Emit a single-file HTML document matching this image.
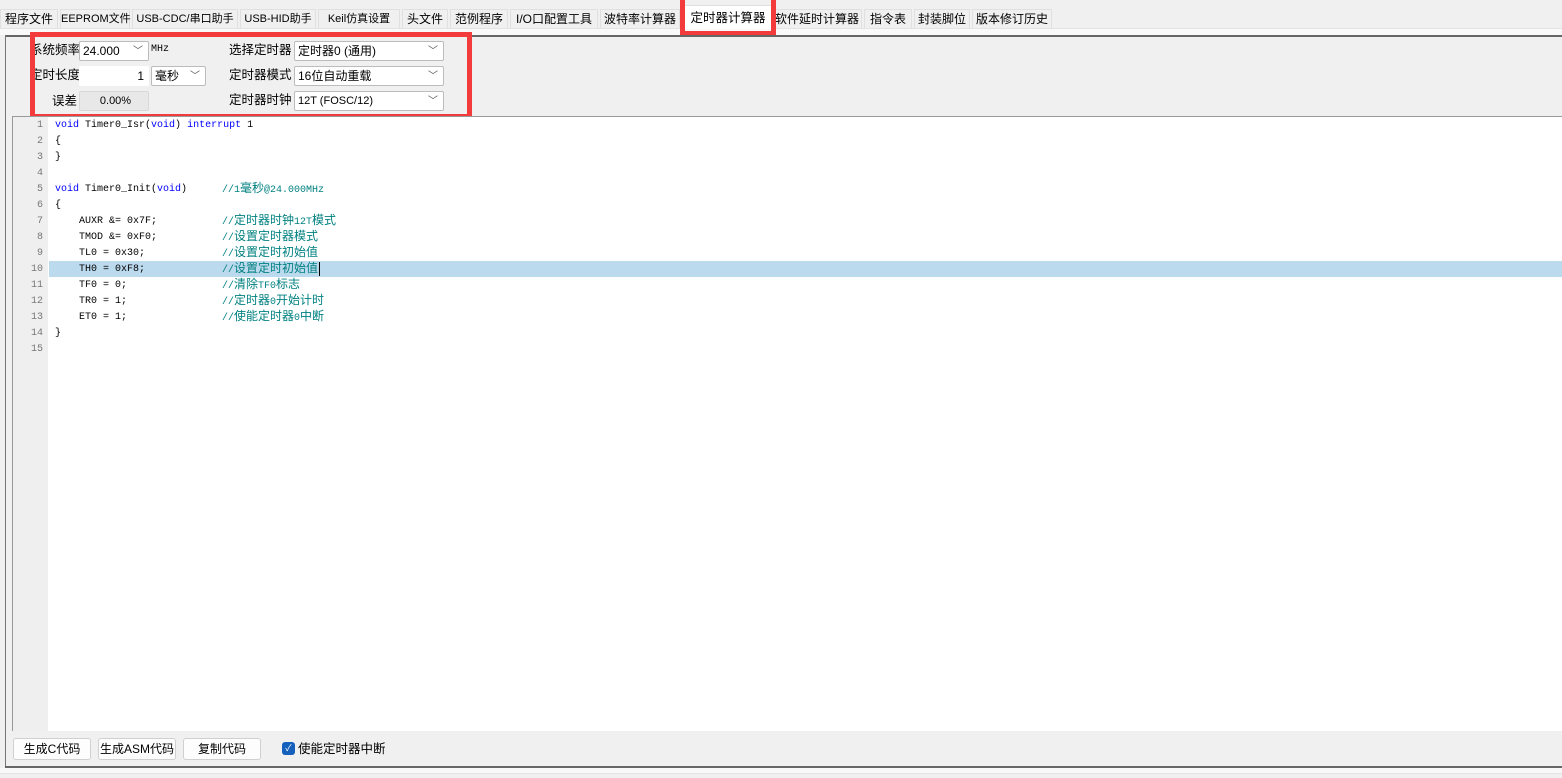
<!DOCTYPE html>
<html><head><meta charset="utf-8"><style>
*{margin:0;padding:0;box-sizing:border-box}
body{width:1562px;height:778px;background:#f0f0f0;position:relative;overflow:hidden;font-family:"Liberation Sans","Noto Sans CJK SC",sans-serif;font-size:12px;color:#000}
.a{position:absolute}
.tab{position:absolute;top:9px;height:19px;background:#f0f0f0;border:1px solid #e0e0e0;border-bottom:none;font-size:12px;line-height:18px;text-align:center;white-space:nowrap}
.sel{top:5px;height:24px;background:#fff;font-size:12.5px;line-height:24px}
.inp{position:absolute;height:20px;background:#fff;border:1px solid #bcbcbc;border-radius:2px;font-size:12px;line-height:18px;padding-left:3px;white-space:nowrap}
.inp .v{position:absolute;right:5px;top:1px;font-size:10px;color:#555}
.lbl{position:absolute;font-size:12.5px;line-height:20px;white-space:nowrap}
.code{position:absolute;left:55px;font-family:"Liberation Mono","Noto Sans CJK SC",monospace;font-size:10px;line-height:16px;white-space:pre;color:#000}
.ln{position:absolute;left:13px;width:30px;text-align:right;font-family:"Liberation Mono",monospace;font-size:10px;line-height:16px;color:#777}
.cm{color:#008080;position:absolute;left:222px;height:16px;font-family:"Liberation Mono","Noto Sans CJK SC",monospace;font-size:12px;line-height:16px;white-space:pre;overflow:visible}
.cm i{font-style:normal;font-size:10px}
.k{color:#0000ff}
.btn{position:absolute;top:738px;height:22px;background:#fdfdfd;border:1px solid #d0d0d0;border-radius:3px;font-size:12px;line-height:20px;text-align:center}
</style></head><body>
<div class="a" style="left:0;top:28px;width:1562px;height:7px;background:#f9f9f9;border-top:1px solid #e3e3e3"></div>
<div class="tab" style="left:0;width:58px">程序文件</div>
<div class="tab" style="left:60px;width:70px;font-size:11px">EEPROM文件</div>
<div class="tab" style="left:132px;width:106px;font-size:11px">USB-CDC/串口助手</div>
<div class="tab" style="left:240px;width:76px;font-size:11px">USB-HID助手</div>
<div class="tab" style="left:318px;width:82px;font-size:11px">Keil仿真设置</div>
<div class="tab" style="left:402px;width:46px">头文件</div>
<div class="tab" style="left:450px;width:58px">范例程序</div>
<div class="tab" style="left:510px;width:88px">I/O口配置工具</div>
<div class="tab" style="left:600px;width:80px">波特率计算器</div>
<div class="tab" style="left:772px;width:90px">软件延时计算器</div>
<div class="tab" style="left:864px;width:48px">指令表</div>
<div class="tab" style="left:914px;width:56px">封装脚位</div>
<div class="tab" style="left:972px;width:80px">版本修订历史</div>
<div class="tab sel" style="left:684px;width:88px">定时器计算器</div>
<div class="a" style="left:680px;top:0;width:96px;height:36px;border:5px solid #f33b3b;border-top:none"></div>
<div class="a" style="left:5px;top:35px;width:1557px;height:2px;background:#666"></div>
<div class="a" style="left:5px;top:35px;width:1px;height:732px;background:#777"></div>
<div class="a" style="left:5px;top:766px;width:1557px;height:2px;background:#666"></div>
<div class="a" style="left:0;top:768px;width:1562px;height:6px;background:#f8f8f8;border-bottom:1px solid #e3e3e3"></div>

<div class="lbl" style="left:30px;top:40px">系统频率</div>
<div class="inp" style="left:79px;top:41px;width:70px">24.000<span class="v">﹀</span></div>
<div class="lbl" style="left:151px;top:40px;font-size:10px;font-family:'Liberation Mono',monospace">MHz</div>
<div class="lbl" style="left:30px;top:65px">定时长度</div>
<div class="inp" style="left:79px;top:66px;width:70px;border-color:#fff;text-align:right;padding-right:4px">1</div>
<div class="inp" style="left:151px;top:66px;width:55px">毫秒<span class="v">﹀</span></div>
<div class="lbl" style="left:52px;top:91px">误差</div>
<div class="inp" style="left:79px;top:91px;width:70px;background:#e8e8e8;border-color:#d8d8d8;text-align:center;font-size:11px">0.00%</div>
<div class="lbl" style="left:229px;top:40px">选择定时器</div>
<div class="inp" style="left:294px;top:41px;width:150px">定时器0 (通用)<span class="v">﹀</span></div>
<div class="lbl" style="left:229px;top:65px">定时器模式</div>
<div class="inp" style="left:294px;top:66px;width:150px">16位自动重载<span class="v">﹀</span></div>
<div class="lbl" style="left:229px;top:90px">定时器时钟</div>
<div class="inp" style="left:294px;top:91px;width:150px;font-size:11px">12T (FOSC/12)<span class="v">﹀</span></div>
<div class="a" style="left:30px;top:32px;width:442px;height:87px;border:5px solid #f33b3b"></div>

<div class="a" style="left:12px;top:116px;width:1550px;height:615px;background:#fff;border-left:1px solid #999;border-top:1px solid #999"></div>
<div class="a" style="left:13px;top:117px;width:35px;height:614px;background:#efefef"></div>
<div class="a" style="left:49px;top:261px;width:1513px;height:16px;background:#bcdaee"></div>
<div class="ln" style="top:118px">1<br>2<br>3<br>4<br>5<br>6<br>7<br>8<br>9<br>10<br>11<br>12<br>13<br>14<br>15</div>
<div class="code" style="top:118px"><span class="k">void</span> Timer0_Isr(<span class="k">void</span>) <span class="k">interrupt</span> 1
{
}

<span class="k">void</span> Timer0_Init(<span class="k">void</span>)
{
    AUXR &amp;= 0x7F;
    TMOD &amp;= 0xF0;
    TL0 = 0x30;
    TH0 = 0xF8;
    TF0 = 0;
    TR0 = 1;
    ET0 = 1;
}</div>
<div class="cm" style="top:181px"><i>//1</i>毫秒<i>@24.000MHz</i></div>
<div class="cm" style="top:213px"><i>//</i>定时器时钟<i>12T</i>模式</div>
<div class="cm" style="top:229px"><i>//</i>设置定时器模式</div>
<div class="cm" style="top:245px"><i>//</i>设置定时初始值</div>
<div class="cm" style="top:261px"><i>//</i>设置定时初始值</div>
<div class="cm" style="top:277px"><i>//</i>清除<i>TF0</i>标志</div>
<div class="cm" style="top:293px"><i>//</i>定时器<i>0</i>开始计时</div>
<div class="cm" style="top:309px"><i>//</i>使能定时器<i>0</i>中断</div>
<div class="a" style="left:319px;top:262px;width:1px;height:14px;background:#000"></div>

<div class="btn" style="left:13px;width:78px">生成C代码</div>
<div class="btn" style="left:98px;width:78px">生成ASM代码</div>
<div class="btn" style="left:183px;width:78px">复制代码</div>
<div class="a" style="left:282px;top:742px;width:13px;height:13px;background:#1560bd;border-radius:3px;color:#fff;font-size:9px;line-height:13px;text-align:center">✓</div>
<div class="lbl" style="left:298px;top:739px">使能定时器中断</div>
</body></html>
